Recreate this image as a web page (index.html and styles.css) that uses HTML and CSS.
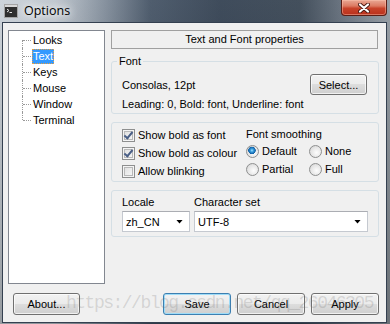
FILE: index.html
```html
<!DOCTYPE html>
<html lang="en">
<head>
  <meta charset="UTF-8">
  <title>Options</title>
  <link rel="stylesheet" href="styles.css">
</head>
<body>
<div class="window">
  <div class="titlebar">
    <span class="app-icon">
      <svg width="14" height="14" viewBox="0 0 14 14">
        <rect x="0.5" y="0.5" width="13" height="13" fill="#2e2e2e" stroke="#a4a4a4"/>
        <rect x="1" y="1" width="12" height="2" fill="#d8d8d8"/>
        <polyline points="3,5 5,6.5 3,8" fill="none" stroke="#e8e8e8" stroke-width="1"/>
        <line x1="5.5" y1="8.5" x2="8" y2="8.5" stroke="#e8e8e8"/>
      </svg>
    </span>
    <span class="title">Options</span>
    <span class="close">
      <svg width="12" height="10" viewBox="0 0 12 10">
        <path d="M2 1.5 L10 8.5 M10 1.5 L2 8.5" stroke="#4a1a14" stroke-width="4" stroke-linecap="round"/>
        <path d="M2 1.5 L10 8.5 M10 1.5 L2 8.5" stroke="#fff" stroke-width="2.2" stroke-linecap="round"/>
      </svg>
    </span>
  </div>
  <div class="client">
    <div class="main">
      <ul class="tree">
        <li><span>Looks</span></li>
        <li class="selected"><span>Text</span></li>
        <li><span>Keys</span></li>
        <li><span>Mouse</span></li>
        <li><span>Window</span></li>
        <li><span>Terminal</span></li>
      </ul>
      <div class="page">
        <div class="page-title">Text and Font properties</div>
        <fieldset class="group font-group">
          <legend>Font</legend>
          <div class="font-row">
            <span>Consolas, 12pt</span>
            <button class="btn select-btn">Select...</button>
          </div>
          <div class="font-info">Leading: 0, Bold: font, Underline: font</div>
        </fieldset>
        <div class="group options-group">
          <div class="checks">
            <label class="check"><span class="box checked"></span>Show bold as font</label>
            <label class="check"><span class="box checked"></span>Show bold as colour</label>
            <label class="check"><span class="box"></span>Allow blinking</label>
          </div>
          <div class="smoothing">
            <div class="smoothing-title">Font smoothing</div>
            <div class="radios">
              <label class="radio"><span class="dot on"></span>Default</label>
              <label class="radio"><span class="dot"></span>None</label>
              <label class="radio"><span class="dot"></span>Partial</label>
              <label class="radio"><span class="dot"></span>Full</label>
            </div>
          </div>
        </div>
        <div class="group locale-group">
          <div class="field locale">
            <div class="field-label">Locale</div>
            <div class="combo">zh_CN</div>
          </div>
          <div class="field charset">
            <div class="field-label">Character set</div>
            <div class="combo">UTF-8</div>
          </div>
        </div>
      </div>
    </div>
    <div class="buttons">
      <button class="btn about">About...</button>
      <button class="btn default save">Save</button>
      <button class="btn">Cancel</button>
      <button class="btn">Apply</button>
    </div>
  </div>
  <div class="watermark">https://blog.csdn.net/qq_26046305</div>
</div>
</body>
</html>
```

FILE: styles.css
```css
body {
    margin: 0;
    font-family: "Liberation Sans", Arial, sans-serif;
    font-size: 11px;
    color: #000;
}

.window {
    position: relative;
    width: 390px;
    height: 324px;
    box-sizing: border-box;
    padding: 0 3px 1px 2px;
    display: flex;
    flex-direction: column;
    overflow: hidden;
    background:
        linear-gradient(to bottom, rgba(255, 255, 255, 0.08), rgba(0, 0, 0, 0.25) 100%),
        linear-gradient(to right, #c9d0d7 0, #bcc4cc 55px, #7d8997 105px, #415062 150px,
            #2f3d4e 220px, #34414f 300px, #5d6875 340px, #8f979f 390px);
}

.titlebar {
    height: 22px;
    flex-shrink: 0;
    display: flex;
    align-items: flex-start;
}

.app-icon {
    margin: 4px 0 0 2px;
    width: 14px;
    height: 14px;
}

.app-icon svg {
    display: block;
}

.title {
    margin: 2px 0 0 6px;
    font-family: "Open Sans", "Noto Sans", sans-serif;
    font-size: 12.5px;
    color: #000;
    text-shadow: 0 0 6px #fff, 0 0 10px rgba(255, 255, 255, 0.9), 0 0 14px rgba(255, 255, 255, 0.7);
}

.close {
    margin-left: auto;
    width: 46px;
    height: 16px;
    box-sizing: border-box;
    border: 1px solid #5c1d14;
    border-top: 0;
    border-radius: 0 0 4px 4px;
    background: linear-gradient(to bottom, #e9a894 0, #dc7a62 40%, #c8432a 55%, #b9301c 100%);
    box-shadow: inset 0 0 0 1px rgba(255, 200, 180, 0.45);
    display: flex;
    align-items: center;
    justify-content: center;
}

.client {
    flex: 1;
    border: 1px solid #344050;
    background: #f0f0f0;
    padding: 7px 7px 7px 5px;
    display: flex;
    flex-direction: column;
}

.main {
    display: flex;
    gap: 6px;
    height: 254px;
}

/* tree */
.tree {
    width: 97px;
    box-sizing: border-box;
    margin: 0;
    padding: 1px 0 0 24px;
    list-style: none;
    border: 1px solid #828790;
    background: #fff;
}

.tree li {
    position: relative;
    height: 16px;
    line-height: 16px;
}

.tree li::before {
    content: '';
    position: absolute;
    left: -11px;
    top: 0;
    bottom: 0;
    border-left: 1px dotted #9a9a9a;
}

.tree li:first-child::before {
    top: 8px;
}

.tree li:last-child::before {
    bottom: 8px;
}

.tree li::after {
    content: '';
    position: absolute;
    left: -10px;
    top: 8px;
    width: 8px;
    border-top: 1px dotted #9a9a9a;
}

.tree li span {
    display: inline-block;
    line-height: 15px;
    padding: 0 1px;
    margin-left: -1px;
}

.tree li.selected span {
    background: #3399ff;
    color: #fff;
    outline: 1px dotted #e8a040;
    outline-offset: -1px;
}

/* right page */
.page {
    width: 268px;
    display: flex;
    flex-direction: column;
}

.page-title {
    height: 19px;
    box-sizing: border-box;
    margin-right: 1px;
    border: 1px solid #a0a0a0;
    text-align: center;
    line-height: 17px;
}

.group {
    margin: 0;
    border: 1px solid #d5dfe5;
    border-radius: 3px;
}

.font-group {
    margin-top: 5px;
    padding: 6px 11px 2px 10px;
    min-width: 0;
}

.font-group legend {
    padding: 0 2px;
    margin-left: -5px;
    line-height: 14px;
}

.font-row {
    display: flex;
    justify-content: space-between;
    align-items: center;
    height: 21px;
}

.font-info {
    margin-top: 2px;
    line-height: 14px;
}

.options-group {
    margin-top: 8px;
    height: 60px;
    box-sizing: border-box;
    padding: 3px 0 0 10px;
    display: flex;
}

.checks {
    width: 124px;
}

.check, .radio {
    display: flex;
    align-items: center;
    gap: 3px;
    height: 18px;
    white-space: nowrap;
}

.box {
    position: relative;
    flex-shrink: 0;
    width: 13px;
    height: 13px;
    box-sizing: border-box;
    border: 1px solid #8e8f8f;
    background: linear-gradient(135deg, #dcdcdc, #fbfbfb);
    box-shadow: inset 0 0 0 1px #f4f4f4, inset 0 0 0 2px #b8b8b8;
}

.box.checked::after {
    content: '';
    position: absolute;
    left: 3px;
    top: 0;
    width: 3px;
    height: 7px;
    border: solid #4a5f86;
    border-width: 0 2px 2px 0;
    transform: rotate(40deg);
}

.smoothing-title {
    margin-top: 1px;
    height: 15px;
    line-height: 15px;
}

.radios {
    display: grid;
    grid-template-columns: 63px auto;
}

.dot {
    flex-shrink: 0;
    width: 13px;
    height: 13px;
    box-sizing: border-box;
    border: 1px solid #8e8f8f;
    border-radius: 50%;
    background: radial-gradient(circle at 60% 60%, #fdfdfd 0, #e4e4e4 60%, #c9c9c9 100%);
}

.dot.on {
    background:
        radial-gradient(circle at 45% 40%, #a8e4ff 0, #3aa0e0 1.5px, #0f5ea4 3.5px, transparent 4px),
        radial-gradient(circle at 60% 60%, #fdfdfd 0, #e4e4e4 60%, #c9c9c9 100%);
}

.locale-group {
    margin-top: 8px;
    padding: 4px 10px;
    display: flex;
    gap: 4px;
}

.field-label {
    line-height: 14px;
    margin-bottom: 2px;
}

.locale {
    width: 68px;
}

.charset {
    flex: 1;
}

.combo {
    height: 21px;
    box-sizing: border-box;
    border: 1px solid #c5c9d0;
    border-top-color: #abadb3;
    background: #fff;
    padding: 0 6px 0 3px;
    display: flex;
    align-items: center;
    justify-content: space-between;
}

.combo::after {
    content: '';
    width: 7px;
    height: 4px;
    background: #000;
    clip-path: polygon(0 0, 100% 0, 50% 100%);
}

/* buttons */
.btn {
    box-sizing: border-box;
    height: 22px;
    padding: 0;
    border: 1px solid #707070;
    border-radius: 3px;
    font: inherit;
    color: #000;
    background: linear-gradient(to bottom, #f2f2f2 0, #ebebeb 50%, #dddddd 50%, #cfcfcf 100%);
    box-shadow: inset 0 0 0 1px rgba(255, 255, 255, 0.7);
}

.select-btn {
    width: 57px;
    height: 21px;
}

.buttons {
    margin-top: 9px;
    padding-left: 5px;
    display: flex;
    gap: 6px;
}

.buttons .btn {
    width: 68px;
}

.buttons .about {
    width: 67px;
}

.buttons .save {
    margin-left: auto;
}

.btn.default {
    border-color: #3c7fb1;
    box-shadow: inset 0 0 0 1px #9edcf8;
}

.watermark {
    position: absolute;
    left: 66px;
    top: 293px;
    font-family: "Liberation Mono", monospace;
    font-size: 18px;
    letter-spacing: -1.5px;
    line-height: 20px;
    color: rgba(110, 110, 110, 0.22);
    pointer-events: none;
    white-space: nowrap;
}
```
